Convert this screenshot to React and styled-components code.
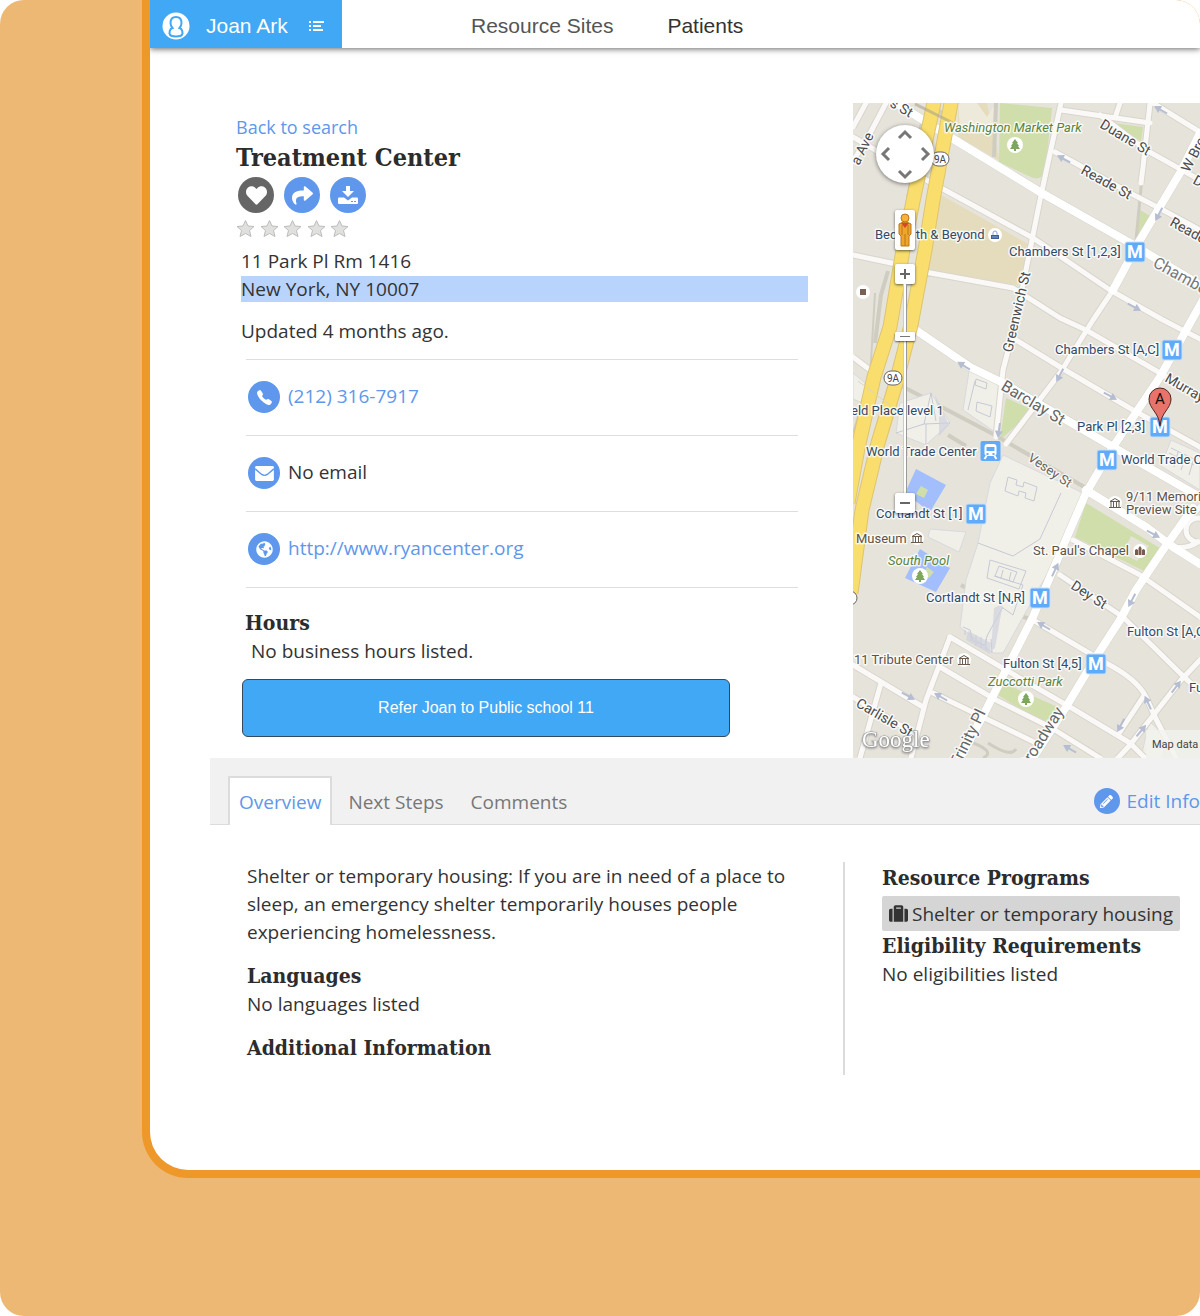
import React from "react";
import styled, { createGlobalStyle, css } from "styled-components";
import { FaHeart, FaShare, FaGlobeAmericas, FaPencilAlt, FaSuitcase } from "react-icons/fa";
import { IoCall } from "react-icons/io5";

const blue = "#5e97ec";
const brand = "#41a8f6";
const body = '"Open Sans", "Noto Sans", sans-serif';
const slab = '"DejaVu Serif Condensed", "DejaVu Serif", serif';
const ui = '"Liberation Sans", Arial, sans-serif';

const GlobalStyle = createGlobalStyle`
  *, *::before, *::after { box-sizing: border-box; }
  body { margin: 0; background: #fff; color: #333; font: 19px/28px ${body}; }
  h1, h2, p, ul, address { margin: 0; padding: 0; font-style: normal; }
  ul { list-style: none; }
  a { color: ${blue}; text-decoration: none; }
  button { border: 0; padding: 0; cursor: pointer; font: inherit; }
  svg { display: block; }
`;

const Backdrop = styled.div`
  min-height: 100vh;
  padding: 0 0 138px 142px;
  background: #ecb873;
  border-radius: 24px;
  overflow: hidden;
`;
const Frame = styled.div`
  background: #fff;
  border: solid #ee982a;
  border-width: 0 0 8px 8px;
  border-radius: 0 24px 0 46px;
  overflow: hidden;
`;
const Header = styled.header`
  display: flex;
  height: 48px;
  font: 21px/24px ${ui};
  box-shadow: 0 1px 6px rgba(0, 0, 0, 0.6);
`;
const UserButton = styled.button`
  display: flex;
  align-items: center;
  width: 192px;
  padding: 3px 17px 0 12px;
  background: ${brand};
  color: #fff;
  svg:last-child { margin-left: auto; }
`;
const UserName = styled.span`
  margin-left: 16px;
`;
const Nav = styled.nav`
  display: flex;
  align-items: center;
  gap: 54px;
  padding: 3px 0 0 129px;
`;
const NavLink = styled.a`
  color: ${(p) => (p.$current ? "#333" : "#555")};
`;
const Main = styled.main`
  padding: 55px 0 95px 60px;
`;
const Site = styled.section`
  display: grid;
  grid-template-columns: minmax(0, 643px) minmax(347px, 1fr);
`;
const Details = styled.div`
  padding: 12px 45px 21px 26px;
`;
const BackLink = styled.a`
  display: block;
  font-size: 18px;
  line-height: 24px;
`;
const Title = styled.h1`
  font: bold 25px/38px ${slab};
  color: #2c2c2c;
`;
const SubTitle = styled.h2`
  padding-top: 1px;
  font: bold 21px/28px ${slab};
  color: #2c2c2c;
`;
const Actions = styled.div`
  display: flex;
  gap: 10px;
  padding-left: 2px;
`;
const round = css`
  display: flex;
  flex: none;
  align-items: center;
  justify-content: center;
  width: ${(p) => p.$size}px;
  height: ${(p) => p.$size}px;
  border-radius: 50%;
  color: #fff;
  background: ${(p) => (p.$dark ? "#666" : blue)};
`;
const ActionButton = styled.button`${round}`;
const Badge = styled.span`${round}`;
const Stars = styled.div`
  display: flex;
  align-items: center;
  justify-content: space-between;
  width: 113px;
  height: 31px;
  margin-bottom: 3px;
`;
const Block = styled.div`
  margin-left: 5px;
`;
const Selected = styled.span`
  display: block;
  margin: 1px 0;
  line-height: 26px;
  background: #b9d4fc;
`;
const Updated = styled.p`
  margin: 15px 0 14px;
`;
const Contacts = styled.ul`
  margin: 0 10px 20px;
  border-bottom: 1px solid #dedede;
`;
const Contact = styled.li`
  display: flex;
  align-items: center;
  gap: 8px;
  height: 76px;
  padding: 0 0 1px 2px;
  border-top: 1px solid #dedede;
`;
const ContactText = styled.span`
  padding-bottom: 3px;
`;
const Hours = styled.div`
  padding-left: 9px;
`;
const HoursText = styled.p`
  padding-left: 6px;
`;
const ReferButton = styled.button`
  width: 488px;
  max-width: 100%;
  height: 58px;
  margin: 14px 0 0 6px;
  font: 16px/20px ${ui};
  color: #fff;
  background: ${brand};
  border: 1px solid #34495e;
  border-radius: 6px;
`;
const TabBar = styled.div`
  display: flex;
  align-items: flex-end;
  height: 67px;
  padding-left: 18px;
  background: #f1f1f1;
  border-bottom: 1px solid #dcdcdc;
`;
const Tab = styled.button`
  height: 49px;
  margin-bottom: -1px;
  padding: 1px 9px 0;
  color: ${(p) => (p.$active ? blue : "#777")};
  background: ${(p) => (p.$active ? "#fff" : "transparent")};
  border: 2px solid ${(p) => (p.$active ? "#dcdcdc" : "transparent")};
  border-bottom: 0;
  & + & { margin-left: 5px; }
`;
const EditLink = styled.a`
  display: flex;
  align-items: center;
  gap: 7px;
  height: 46px;
  margin-left: auto;
  white-space: nowrap;
`;
const Overview = styled.section`
  display: grid;
  grid-template-columns: minmax(0, 633px) minmax(357px, 1fr);
  margin-top: 37px;
`;
const Summary = styled.div`
  min-height: 213px;
  padding: 0 50px 0 37px;
  ${SubTitle} { margin-top: 15px; }
`;
const Programs = styled.div`
  padding: 1px 20px 0 37px;
  border-left: 2px solid #dcdcdc;
`;
const Tag = styled.span`
  display: flex;
  align-items: center;
  gap: 4px;
  width: fit-content;
  height: 35px;
  margin: 4px 0 0;
  padding: 0 7px;
  background: #d5d5d5;
  border-radius: 2px;
  white-space: nowrap;
`;

/* ---- map ---- */
const MapPanel = styled.div`
  position: relative;
  height: 655px;
  overflow: hidden;
  background: #e6e3db;
`;
const MapControls = styled.div`
  position: absolute;
  top: 22px;
  left: 23px;
  display: flex;
  flex-direction: column;
  align-items: center;
  width: 58px;
`;
const PanPad = styled.div`
  display: grid;
  grid-template-columns: 19px 20px 19px;
  grid-template-rows: 19px 20px 19px;
  border-radius: 50%;
  background: #fff;
  box-shadow: 0 1px 4px rgba(0, 0, 0, 0.5);
`;
const PanButton = styled.button`
  display: grid;
  place-items: center;
  grid-area: ${(p) => p.$area};
  background: none;
`;
const MapButton = styled.button`
  display: grid;
  place-items: center;
  width: 20px;
  height: ${(p) => p.$height}px;
  margin-top: ${(p) => p.$gap}px;
  background: #fff;
  border-radius: 2px;
  box-shadow: 0 1px 3px rgba(0, 0, 0, 0.6);
`;
const ZoomSlider = styled.input`
  appearance: none;
  writing-mode: vertical-lr;
  direction: rtl;
  width: 20px;
  height: 209px;
  margin: 0;
  background: linear-gradient(90deg, transparent 8px, #999 8px, #fff 9px, #fff 11px, #999 11px, #999 12px, transparent 12px);
  &::-webkit-slider-thumb {
    appearance: none;
    width: 20px;
    height: 9px;
    border-radius: 1px;
    background: linear-gradient(#fff 4px, #777 4px, #777 5px, #fff 5px) center / 10px 9px no-repeat, #fff;
    box-shadow: 0 1px 2px rgba(0, 0, 0, 0.6);
  }
`;
const Canvas = styled.svg`
  width: 100%;
  height: 100%;
  font-family: Roboto, sans-serif;
`;
const Label = styled.text`
  fill: ${(p) => p.$fill || "#304b6b"};
  font-style: ${(p) => (p.$italic ? "italic" : "normal")};
  font-size: ${(p) => p.$size || 13}px;
  stroke: #fff;
  stroke-width: 3px;
  stroke-opacity: 0.75;
  stroke-linejoin: round;
  paint-order: stroke;
`;
const Watermark = styled.text`
  font: 23px "Liberation Serif", serif;
  fill: #fff;
  stroke: #999;
  stroke-width: 1px;
  paint-order: stroke;
  filter: drop-shadow(0 1px 1px #888);
`;

const thin = [
  "M0 34 L77 79 L180 135 L257 187 L310 217 L347 236",
  "M0 152 L43 161 L72 169 L160 185 L207 215 L233 227 L307 270 L347 294",
  "M163 237 L207 264 L280 307 L347 344",
  "M208 0 L187 97 L173 167 L163 217 L150 267 L143 334",
  "M260 187 L240 217 L207 270 L153 341",
  "M297 0 L290 64 L288 80",
  "M267 0 L263 12 M208 7 L297 20",
  "M202 49 L277 90 L310 107 L347 127",
  "M247 12 L293 47 L347 77",
  "M300 0 L347 29",
  "M207 472 L270 514 L327 570 L347 589",
  "M220 437 L287 472 L347 514",
  "M180 517 L253 560 Q284 576 293 594 L302 614 L323 655",
  "M97 534 L153 567 L217 604 L277 640 L292 655",
  "M87 564 L143 597 L197 624 L247 655",
  "M80 590 L183 640",
  "M0 562 L70 604",
  "M0 594 L60 630",
  "M97 534 L73 597 L58 655",
  "M28 580 L7 655",
  "M290 594 L265 632",
  "M347 557 L328 577 L277 642 L265 655",
  "M33 0 L14 36 L0 58 M13 0 L0 24",
  "M0 254 L21 270",
  "M347 404 L333 417 M357 427 A12 12 0 1 0 345 439",
  "M320 444 Q335 446 345 439",
];
const wide = [
  "M43 0 L97 34 L187 89 L277 140 L347 182",
  "M60 225 L117 264 L150 280 L260 344 L347 394",
  "M347 30 L327 70 L287 137 L260 187",
  "M350 197 L307 274 L260 344 L233 390 L217 427 L180 514 L153 567 L133 607 L107 655",
  "M340 405 L310 447 L283 487 L267 517 L243 554 L213 604 L180 655",
  "M233 387 L293 424 L320 444 L347 461",
];
const arrows = [
  [308, 7, 210], [211, 56, 208], [306, 111, 118], [281, 204, 28], [111, 263, 212],
  [207, 272, 118], [257, 293, 28], [146, 327, 98], [300, 431, 28], [202, 467, -65],
  [279, 497, 118], [191, 523, 210], [55, 593, 28], [88, 594, 210], [295, 600, 245],
  [268, 622, 118], [323, 584, -52], [288, 628, -50], [217, 646, 210],
];
const metros = [[282, 149], [319, 247], [307, 324], [254, 357], [123, 411], [187, 495], [243, 561]];
const trees = [[162, 42], [67, 473], [173, 596]];
const green = "#5a843c";
const brown = "#5d5347";
const street = "#4b4b4b";

const labels = [
  { x: 91, y: 29, t: "Washington Market Park", f: green, i: 1 },
  { x: 22, y: 136, t: "Bed Bath & Beyond" },
  { x: 156, y: 153, t: "Chambers St [1,2,3]" },
  { x: 202, y: 251, t: "Chambers St [A,C]" },
  { x: -2, y: 312, t: "eld Place level 1" },
  { x: 224, y: 328, t: "Park Pl [2,3]" },
  { x: 13, y: 353, t: "World Trade Center" },
  { x: 268, y: 361, t: "World Trade Center" },
  { x: 23, y: 415, t: "Cortlandt St [1]" },
  { x: 273, y: 398, t: "9/11 Memorial", f: brown },
  { x: 273, y: 411, t: "Preview Site", f: brown },
  { x: 3, y: 440, t: "Museum", f: brown },
  { x: 35, y: 462, t: "South Pool", f: green, i: 1 },
  { x: 180, y: 452, t: "St. Paul's Chapel", f: brown },
  { x: 73, y: 499, t: "Cortlandt St [N,R]" },
  { x: 274, y: 533, t: "Fulton St [A,C]" },
  { x: 1, y: 561, t: "11 Tribute Center", f: brown },
  { x: 150, y: 565, t: "Fulton St [4,5]" },
  { x: 135, y: 583, t: "Zuccotti Park", f: green, i: 1 },
  { x: 336, y: 589, t: "Fulton St" },
  { x: 36, y: 3, t: "s St", f: street, r: 30, s: 14 },
  { x: 6, y: 63, t: "a Ave", f: street, r: -64, s: 14 },
  { x: 246, y: 24, t: "Duane St", f: street, r: 31, s: 14 },
  { x: 227, y: 70, t: "Reade St", f: street, r: 29, s: 14 },
  { x: 336, y: 70, t: "W Broadway", f: street, r: -62, s: 14 },
  { x: 339, y: 80, t: "Duane St", f: street, r: 29, s: 14 },
  { x: 316, y: 122, t: "Reade St", f: street, r: 29, s: 14 },
  { x: 299, y: 163, t: "Chambers St", f: "#777", r: 29, s: 16 },
  { x: 159, y: 250, t: "Greenwich St", f: street, r: -77, s: 14 },
  { x: 147, y: 286, t: "Barclay St", f: "#666", r: 31, s: 16 },
  { x: 311, y: 278, t: "Murray St", f: street, r: 30, s: 14 },
  { x: 174, y: 357, t: "Vesey St", f: "#666", r: 34, s: 13 },
  { x: 217, y: 485, t: "Dey St", f: street, r: 33, s: 14 },
  { x: 2, y: 603, t: "Carlisle St", f: street, r: 30, s: 14 },
  { x: 106, y: 665, t: "Trinity Pl", f: "#666", r: -64, s: 16 },
  { x: 174, y: 668, t: "Broadway", f: "#666", r: -58, s: 16 },
];

function StreetMap() {
  return (
    <Canvas viewBox="0 0 347 655" preserveAspectRatio="xMinYMin slice" role="img" aria-label="Street map of Lower Manhattan">
      <rect width="347" height="655" fill="#e6e3db" />
      <g fill="#e5dcbd">
        <path d="M88 92 L177 142 L165 182 L75 167Z M105 0 L134 0 L136 10 L147 58 L140 54 L105 34Z" />
      </g>
      <path d="M105 0 L124 0 L134 14 L143 0 L144 30 L107 26Z" fill="#eeeadb" />
      <g fill="#cfdeaa">
        <path d="M147 0 L199 5 L192 70 Q188 77 180 75 L146 59Z" />
        <path d="M260 20 L290 24 L288 38Z M287 107 L297 113 L283 137Z M153 295 L180 307 L147 337Z" />
        <path d="M233 400 L310 447 L293 469 L222 434Z M150 580 L207 605 L193 622 L145 592Z" />
      </g>
      <path d="M278 433 L296 443 L284 458 L270 451Z" fill="#e6e3db" />
      <g fill="#a2befd">
        <path d="M63 366 L93 382 L77 409 L52 390Z M67 446 L97 465 L83 489 L52 475Z" />
      </g>
      <path d="M68 383 L75 387 L71 395 L63 391Z M74 464 L81 469 L76 475 L70 471Z" fill="#cfdeaa" />
      <g fill="none" stroke="#cfccc2" strokeWidth="4">
        <path d="M143 0 L141 54 M77 0 L100 20 M70 14 L55 95 M75 160 Q68 171 77 172 M35 168 L28 192 L22 240 M43 280 L140 331 L233 385 M95 332 L113 343 M108 482 L150 507 L180 517" />
        <path d="M290 64 L283 137 M112 637 Q145 648 130 655 M135 640 Q158 655 163 646" strokeWidth="3" />
        <path d="M22 190 L17 275 L0 330" strokeWidth="2" />
      </g>
      <g fill="#f1f0e8" stroke="#d9d9de" strokeWidth="1">
        <path d="M150 352 L230 390 L213 437 L150 550 L140 550 L107 524 L113 477 L125 440 L137 380Z" />
        <path d="M117 262 L147 277 L142 329 L110 307Z M47 300 L78 290 L97 320 L73 342 L43 330Z M77 426 L113 429 L106 449 L75 434Z M0 270 L12 280 L10 300 L0 296Z M318 337 L347 350 L347 387 L308 363Z M296 618 L312 633 L310 655 L288 655Z" />
      </g>
      <g fill="none" stroke="#c6c9d6" strokeWidth="1">
        <path d="M125 440 L160 453 L187 436 L208 390 M141 473 L170 482 L160 512 L150 505 M137 457 L173 468 L166 486 L134 475Z M146 463 L164 469 L160 479 L142 473Z M150 467 L148 475 M158 469 L156 478" />
        <path d="M155 374 L164 377 L163 382 L170 384 L171 379 L184 384 L181 398 L172 395 L173 390 L166 388 L165 393 L152 388Z" />
        <path d="M123 276 L134 280 L133 286 L122 282Z M124 299 L139 303 L137 314 L123 308Z M122 278 L115 307 M78 290 L71 321 L43 330 M71 321 L97 320 M73 321 L73 342 M78 290 L83 318" />
        <path d="M110 524 L117 527 L120 538 L132 542 L134 533 L150 504 M112 527 L112 532 M118 530 L118 538 M123 532 L123 543 M128 534 L128 545 M133 536 L133 548 M138 536 L139 550" />
        <path d="M318 345 L343 357 M316 350 L341 362 M325 349 L321 364 M333 352 L328 367 M341 355 L336 372" />
      </g>
      <path d="M115 528 L138 540 L137 551 L113 537Z M141 505 L150 500 L142 545 L138 548Z M82 292 L96 322 L86 333 L86 313Z" fill="#cfd1dd" opacity=".7" />
      <g fill="none" stroke="#d8d5cb" strokeLinejoin="round">
        {thin.map((d) => <path key={d} d={d} strokeWidth="7" />)}
        {wide.map((d) => <path key={d} d={d} strokeWidth="9" />)}
      </g>
      <g fill="none" stroke="#faf9f7" strokeLinejoin="round" strokeLinecap="round">
        {thin.map((d) => <path key={d} d={d} strokeWidth="5" />)}
        {wide.map((d) => <path key={d} d={d} strokeWidth="8" stroke="#fff" />)}
      </g>
      <g fill="none" strokeLinejoin="round">
        <path d="M82 -5 L63 84 L50 147 L37 224 L21 274 L5 345 L-5 400" stroke="#dcc474" strokeWidth="15" />
        <path d="M99 -5 L80 97 L72 147 L58 222 L43 280 L25 340 L9 407 L-2 490" stroke="#dcc474" strokeWidth="15" />
        <path d="M82 -5 L63 84 L50 147 L37 224 L21 274 L5 345 L-5 400" stroke="#f9de6d" strokeWidth="13" />
        <path d="M99 -5 L80 97 L72 147 L58 222 L43 280 L25 340 L9 407 L-2 490" stroke="#f9de6d" strokeWidth="13" />
        <path d="M62 1 L102 21" stroke="#aaa38a" strokeOpacity=".6" strokeWidth="3" />
        <path d="M5 278 L38 303" stroke="#ddd6bd" />
      </g>
      {arrows.map(([x, y, r]) => (
        <path key={`${x}-${y}`} d="M-7 -1 H1 V-4 L8 0 L1 4 V1 H-7Z" fill="#b5bdd2" transform={`translate(${x} ${y}) rotate(${r})`} />
      ))}
      {[[87, 56], [40, 275]].map(([x, y]) => (
        <g key={y}>
          <rect x={x - 9} y={y - 7} width="18" height="14" rx="7" fill="#fff" stroke="#666" />
          <text x={x} y={y + 4} fontSize="10" textAnchor="middle" fill="#444">9A</text>
        </g>
      ))}
      <rect x="-14" y="488" width="18" height="14" rx="7" fill="#fff" stroke="#666" />
      {labels.map((l) => (
        <Label key={`${l.t}${l.y}`} $fill={l.f} $italic={l.i} $size={l.s} transform={`translate(${l.x} ${l.y}) rotate(${l.r || 0})`}>
          {l.t}
        </Label>
      ))}
      {metros.map(([x, y]) => (
        <g key={`${x}-${y}`}>
          <rect x={x - 10} y={y - 10} width="20" height="20" rx="2" fill="#5fabfa" stroke="#c9dff5" strokeWidth="1" />
          <text x={x} y={y + 6} fontSize="18" fontWeight="700" textAnchor="middle" fill="#fff">M</text>
        </g>
      ))}
      <g transform="translate(137.500 348)">
        <rect x="-10" y="-10" width="20" height="20" rx="2" fill="#5fabfa" />
        <rect x="-6" y="-7" width="12" height="12" rx="3" fill="#fff" />
        <path d="M-4 -4 H4 V0 H-4Z M-4 2 h2 v2 h-2Z M2 2 h2 v2 h-2Z" fill="#5fabfa" />
        <path d="M-4 5 L-6 8 M4 5 L6 8" stroke="#fff" strokeWidth="2" />
      </g>
      {trees.map(([x, y]) => (
        <g key={`${x}-${y}`} transform={`translate(${x} ${y})`}>
          <circle r="8" fill="#fff" />
          <path d="M0 -6 L3 -2 H2 L4 1 H3 L5 4 H1 V6 H-1 V4 H-5 L-3 1 H-4 L-2 -2 H-3Z" fill="#7da75a" />
        </g>
      ))}
      {[[262, 400], [64, 435], [111, 557]].map(([x, y]) => (
        <g key={`${x}-${y}`} transform={`translate(${x} ${y})`} fill="none" stroke="#6b5c4d">
          <circle r="7" fill="#fff" stroke="none" />
          <path d="M-5 -1.500 L0 -4.500 L5 -1.500Z M-4 -1 V4 M-1.500 -1 V4 M1.500 -1 V4 M4 -1 V4 M-6 4.500 H6" />
        </g>
      ))}
      <g transform="translate(287 448)">
        <circle r="7" fill="#fff" />
        <path d="M-5 4 V-1 L-3.500 -2 L-2 -1 V4Z M-1.500 4 V-3 L0 -5 L1.500 -3 V4Z M2 4 V-1 L3.500 -2 L5 -1 V4Z" fill="#7a5a4d" />
      </g>
      <g transform="translate(142 132)">
        <circle r="7" fill="#fff" />
        <path d="M-4 0 H4 V4 H-4Z" fill="#3d5f96" />
        <path d="M-2 0 V-2 A2 2 0 0 1 2 -2 V0 M-3 2 H3" fill="none" stroke="#8aa6d0" />
      </g>
      <circle cx="10" cy="189" r="7" fill="#fff" />
      <rect x="7" y="186" width="6" height="6" fill="#7a5f55" />
      <g transform="translate(307 323)">
        <path d="M0 0 C-1 -14 -11 -17 -11 -27 A11 11 0 0 1 11 -27 C11 -17 1 -14 0 0Z" fill="#e7736a" stroke="#4a2723" />
        <text y="-22" fontSize="15" textAnchor="middle" fill="#111">A</text>
      </g>
      <Watermark x="9" y="644">Google</Watermark>
      <rect x="293" y="627" width="54" height="28" fill="#f3f2ee" opacity=".8" />
      <text x="299" y="645" fontSize="11" fill="#444">Map data</text>
    </Canvas>
  );
}

const pans = [["Pan up", "1 / 2", 0], ["Pan right", "2 / 3", 90], ["Pan down", "3 / 2", 180], ["Pan left", "2 / 1", 270]];

function SiteMap() {
  return (
    <MapPanel>
      <StreetMap />
      <MapControls>
        <PanPad>
          {pans.map(([name, area, turn]) => (
            <PanButton key={name} $area={area} aria-label={name}>
              <svg width="16" height="16" viewBox="-8 -8 16 16">
                <path d="M-6 3 L0 -3 L6 3" fill="none" stroke="#777" strokeWidth="3" transform={`rotate(${turn})`} />
              </svg>
            </PanButton>
          ))}
        </PanPad>
        <MapButton $height={40} $gap={27} aria-label="Street View">
          <svg width="18" height="36" viewBox="0 0 18 36">
            <path d="M3 12 Q9 8 15 12 V22 L13 24 V34 H5 V24 L3 22Z" fill="#efa52a" stroke="#b9761a" />
            <path d="M9 22 V34 M6 13 V23 M12 13 V23" stroke="#b9761a" />
            <path d="M5 11 L9 16 L13 11Z" fill="#d9432f" />
            <circle cx="9" cy="6" r="4" fill="#f5b13a" stroke="#b9761a" />
          </svg>
        </MapButton>
        <MapButton $height={20} $gap={14} aria-label="Zoom in">
          <svg width="12" height="12"><path d="M1 6 H11 M6 1 V11" stroke="#666" strokeWidth="2" /></svg>
        </MapButton>
        <ZoomSlider type="range" min="0" max="100" defaultValue="76" aria-label="Zoom level" />
        <MapButton $height={20} $gap={0} aria-label="Zoom out">
          <svg width="12" height="12"><path d="M1 6 H11" stroke="#666" strokeWidth="2" /></svg>
        </MapButton>
      </MapControls>
    </MapPanel>
  );
}

const UserIcon = () => (
  <svg width="28" height="28" viewBox="0 0 28 28">
    <circle cx="14" cy="14" r="13.500" fill="#fff" />
    <path d="M14 5 C17.500 5 19.500 7.500 19.500 11 C19.500 13.500 18.500 15 17.500 16 C20.500 17 20.500 19 20.500 21.500 Q20 24.500 14 24.500 Q8 24.500 7.500 21.500 C7.500 19 7.500 17 10.500 16 C9.500 15 8.500 13.500 8.500 11 C8.500 7.500 10.500 5 14 5Z" fill="#fff" stroke={brand} strokeWidth="2" />
  </svg>
);
const ListIcon = () => (
  <svg width="17" height="12" viewBox="0 0 17 12" stroke="#fff" strokeWidth="2">
    <path d="M1 2 H3 M5 2 H16 M1 6 H3 M5 6 H13 M1 10 H3 M5 10 H15" />
  </svg>
);
const DownloadIcon = () => (
  <svg width="20" height="20" viewBox="0 0 20 20" fill="#fff">
    <path d="M8 1 H12 V6 H16 L10 12 L4 6 H8Z" />
    <path d="M1 12.500 H6 L10 15.500 L14 12.500 H19 Q20 12.500 20 13.500 V18 Q20 19 19 19 H1 Q0 19 0 18 V13.500 Q0 12.500 1 12.500Z" />
    <path d="M13 16 h2 v1 h-2Z M16 16 h2 v1 h-2Z" fill={blue} />
  </svg>
);
const EnvelopeIcon = () => (
  <svg width="19" height="15" viewBox="0 0 20 16">
    <rect width="20" height="16" rx="1.500" fill="#fff" />
    <path d="M0 3 L7 9 Q10 11 13 9 L20 3" fill="none" stroke={blue} strokeWidth="1.500" />
  </svg>
);
const Star = () => (
  <svg width="19" height="19" viewBox="0 0 19 19">
    <path d="M9.500 1.500 L12 7 L18 7.500 L13.500 11.500 L15 17.500 L9.500 14.500 L4 17.500 L5.500 11.500 L1 7.500 L7 7Z" fill="#e0e0de" stroke="#bcbcbc" />
  </svg>
);

export default function App() {
  return (
    <Backdrop>
      <GlobalStyle />
      <Frame>
        <Header>
          <UserButton>
            <UserIcon />
            <UserName>Joan Ark</UserName>
            <ListIcon />
          </UserButton>
          <Nav>
            <NavLink href="#sites">Resource Sites</NavLink>
            <NavLink href="#patients" $current>Patients</NavLink>
          </Nav>
        </Header>
        <Main>
          <Site>
            <Details>
              <BackLink href="#search">Back to search</BackLink>
              <Title>Treatment Center</Title>
              <Actions>
                <ActionButton $size={36} $dark aria-label="Save"><FaHeart size={21} /></ActionButton>
                <ActionButton $size={36} aria-label="Share"><FaShare size={21} /></ActionButton>
                <ActionButton $size={36} aria-label="Download"><DownloadIcon /></ActionButton>
              </Actions>
              <Stars role="img" aria-label="Not rated">
                {[1, 2, 3, 4, 5].map((n) => <Star key={n} />)}
              </Stars>
              <Block>
                <address>
                  11 Park Pl Rm 1416
                  <Selected>New York, NY 10007</Selected>
                </address>
                <Updated>Updated 4 months ago.</Updated>
              </Block>
              <Contacts>
                <Contact>
                  <Badge $size={32}><IoCall size={17} /></Badge>
                  <ContactText as="a" href="tel:+12123167917">(212) 316-7917</ContactText>
                </Contact>
                <Contact>
                  <Badge $size={32}><EnvelopeIcon /></Badge>
                  <ContactText>No email</ContactText>
                </Contact>
                <Contact>
                  <Badge $size={32}><FaGlobeAmericas size={17} /></Badge>
                  <ContactText as="a" href="http://www.ryancenter.org">http://www.ryancenter.org</ContactText>
                </Contact>
              </Contacts>
              <Hours>
                <SubTitle>Hours</SubTitle>
                <HoursText>No business hours listed.</HoursText>
              </Hours>
              <ReferButton>Refer Joan to Public school 11</ReferButton>
            </Details>
            <SiteMap />
          </Site>
          <TabBar>
            <Tab $active>Overview</Tab>
            <Tab>Next Steps</Tab>
            <Tab>Comments</Tab>
            <EditLink href="#edit">
              <Badge $size={26}><FaPencilAlt size={13} /></Badge>
              Edit Info
            </EditLink>
          </TabBar>
          <Overview>
            <Summary>
              <p>
                Shelter or temporary housing: If you are in need of a place to sleep, an emergency
                shelter temporarily houses people experiencing homelessness.
              </p>
              <SubTitle>Languages</SubTitle>
              <p>No languages listed</p>
              <SubTitle>Additional Information</SubTitle>
            </Summary>
            <Programs>
              <SubTitle>Resource Programs</SubTitle>
              <Tag><FaSuitcase size={19} />Shelter or temporary housing</Tag>
              <SubTitle>Eligibility Requirements</SubTitle>
              <p>No eligibilities listed</p>
            </Programs>
          </Overview>
        </Main>
      </Frame>
    </Backdrop>
  );
}
